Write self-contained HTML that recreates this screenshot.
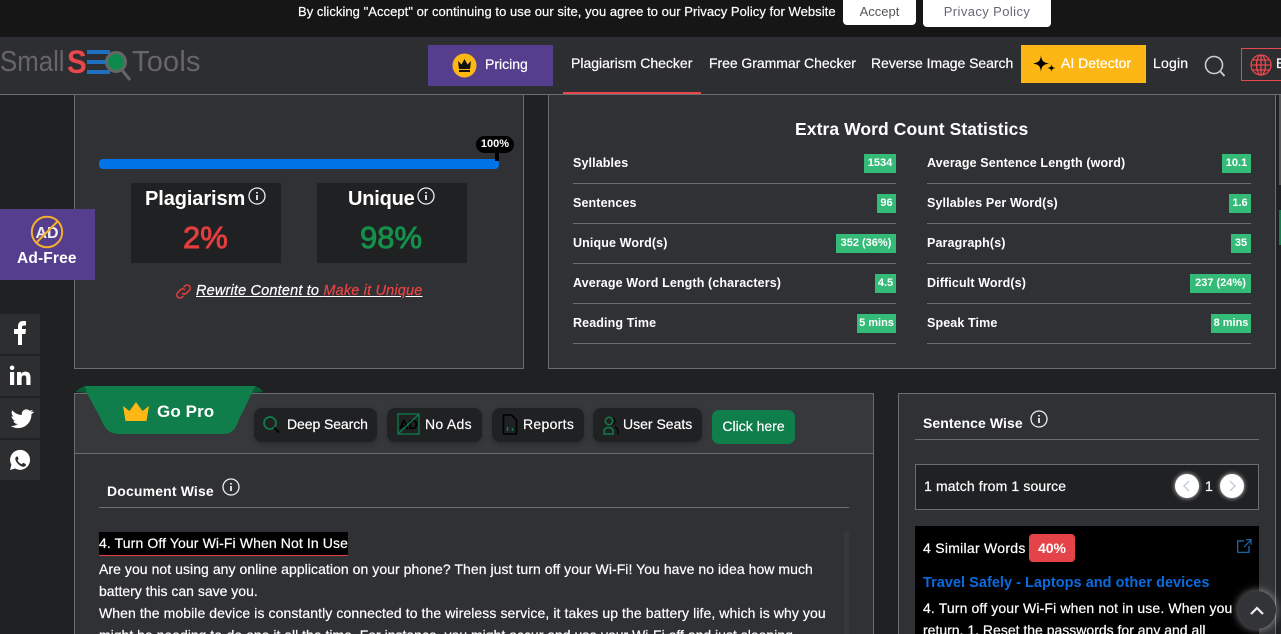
<!DOCTYPE html>
<html><head><meta charset="utf-8"><style>
html,body{margin:0;padding:0;width:1281px;height:634px;overflow:hidden;background:#202123}
body{position:relative;font-family:"Liberation Sans",sans-serif;color:#fff}
.a,.t{position:absolute}
.t{white-space:nowrap;line-height:18px;font-size:14px;-webkit-text-stroke:.2px #fff}
.b{font-weight:700;-webkit-text-stroke:0}
.lb{font-size:12.500px;letter-spacing:.12px}
.box{position:absolute;box-sizing:border-box}
.panel{position:absolute;box-sizing:border-box;background:#303134;border:1px solid #6d6d6d}
.hr{position:absolute;height:1px;background:#6d6d6d}
.bd{position:absolute;height:19px;background:#34bb78;font-size:11px;font-weight:700;line-height:19px;text-align:center;white-space:nowrap}
.soc{position:absolute;left:0;width:40px;height:40px;background:#2d2e30}
.chip{position:absolute;top:408px;height:34px;background:#202123;border-radius:8px;box-shadow:0 2px 6px rgba(0,0,0,.25)}
.logo{-webkit-text-stroke:0;color:#666;font-size:29px;line-height:34px;transform-origin:0 0}
svg{position:absolute;overflow:visible}
</style></head><body>

<div class="box" style="left:0;top:0;width:1281px;height:37px;background:#161616"></div>
<div class="t" style="left:298px;top:3px;font-size:13px;letter-spacing:.05px">By clicking "Accept" or continuing to use our site, you agree to our Privacy Policy for Website</div>
<div class="box" style="left:843px;top:0;width:73px;height:25px;background:#fff;border-radius:0 0 4px 4px;color:#555;font-size:13px;text-align:center;line-height:24px">Accept</div>
<div class="box" style="left:923px;top:0;width:128px;height:27px;background:#fff;border-radius:0 0 4px 4px;color:#667;font-size:13px;text-align:center;line-height:24px;letter-spacing:.4px">Privacy Policy</div>

<div class="box" style="left:0;top:37px;width:1281px;height:58px;background:#2d2e31;border-bottom:1px solid #6d6d6d"></div>
<div class="t logo" style="left:0;top:45px;transform:scaleX(.89)">Small</div>
<div class="t logo" style="left:67px;top:45px;font-size:32px;color:#e8474c;font-weight:700;transform:scaleX(.92)">S</div>
<svg style="left:0;top:0" width="1" height="1">
<g fill="#2070c0"><rect x="87" y="50" width="23" height="4"/><rect x="87" y="60" width="20" height="4"/><rect x="87" y="70" width="23" height="4"/></g>
<circle cx="116" cy="62" r="9.500" fill="#0f8a4f" stroke="#666" stroke-width="3"/>
<path d="M122 70l8 10" stroke="#666" stroke-width="3" fill="none"/></svg>
<div class="t logo" style="left:132px;top:45px;letter-spacing:.2px">Tools</div>

<div class="box" style="left:428px;top:45px;width:125px;height:41px;background:#553e8d"></div>
<svg style="left:452px;top:53px" width="26" height="26"><ellipse cx="12.500" cy="12.500" rx="12" ry="12" fill="#fdb714"/><path d="M6 8l3.500 3.500L12.500 6l3 5.500L19 8l-1 8H7z" fill="#111"/><rect x="7" y="17" width="11" height="2" fill="#111"/></svg>
<div class="t" style="left:485px;top:55px;font-size:14px">Pricing</div>
<div class="t" style="left:571px;top:54px;font-size:14px">Plagiarism Checker</div>
<div class="box" style="left:563px;top:92px;width:138px;height:2px;background:#e8474c"></div>
<div class="t" style="left:709px;top:54px;font-size:14px;letter-spacing:-.05px">Free Grammar Checker</div>
<div class="t" style="left:871px;top:54px;font-size:14px;letter-spacing:-.05px">Reverse Image Search</div>
<div class="box" style="left:1021px;top:45px;width:125px;height:38px;background:#fdb714"></div>
<svg style="left:1032px;top:54px" width="24" height="20"><path d="M9 1c.5 5.500 1.800 7.300 8 8.500-6.200 1.200-7.500 3-8 8.500-.5-5.500-1.800-7.300-8-8.500 6.200-1.200 7.500-3 8-8.500z" fill="#000"/><path d="M19.500 10c.2 2.600 1 3.400 4 4-3 .6-3.800 1.400-4 4-.2-2.600-1-3.400-4-4 3-.6 3.800-1.400 4-4z" fill="#000"/></svg>
<div class="t" style="left:1061px;top:54px;font-size:14px">AI Detector</div>
<div class="t" style="left:1153px;top:54px;font-size:14px;letter-spacing:.2px">Login</div>
<svg style="left:1204px;top:55px" width="24" height="24"><circle cx="10" cy="10" r="8.500" fill="none" stroke="#ccc" stroke-width="1.600"/><path d="M16 16l4.500 5" stroke="#ccc" stroke-width="1.800"/></svg>
<div class="box" style="left:1241px;top:48px;width:60px;height:33px;border:1px solid #e8474c"></div>
<svg style="left:1250px;top:54px" width="22" height="22" fill="none" stroke="#e8474c" stroke-width="1.300"><circle cx="11" cy="11" r="10"/><ellipse cx="11" cy="11" rx="4.500" ry="10"/><path d="M11 1v20M1 11h20M3 6h16M3 16h16"/></svg>
<div class="t" style="left:1276px;top:54px;font-size:14px">E</div>

<div class="panel" style="left:74px;top:94px;width:450px;height:275px"></div>
<div class="panel" style="left:548px;top:94px;width:728px;height:275px"></div>

<div class="box" style="left:99px;top:159px;width:400px;height:10px;background:#0073e6;border-radius:4px"></div>
<div class="box" style="left:476px;top:136px;width:38px;height:17px;background:#000;border-radius:9px;font-size:11px;font-weight:700;text-align:center;line-height:17px">100%</div>
<div class="box" style="left:495px;top:152px;width:4px;height:9px;background:#000"></div>

<div class="box" style="left:131px;top:183px;width:150px;height:80px;background:#202123"></div>
<div class="box" style="left:317px;top:183px;width:150px;height:80px;background:#202123"></div>
<div class="t b" style="left:145px;top:187px;font-size:20px;line-height:24px;letter-spacing:-.1px">Plagiarism</div>
<div class="t b" style="left:348px;top:187px;font-size:20px;line-height:24px;letter-spacing:-.2px">Unique</div>
<svg style="left:248px;top:187px" width="18" height="18" fill="none" stroke="#eee" stroke-width="1.300"><circle cx="9" cy="9" r="8"/><path d="M9 8v5M9 5v1.500" stroke-width="1.800"/></svg>
<svg style="left:417px;top:187px" width="18" height="18" fill="none" stroke="#eee" stroke-width="1.300"><circle cx="9" cy="9" r="8"/><path d="M9 8v5M9 5v1.500" stroke-width="1.800"/></svg>
<div class="t" style="left:183px;top:220px;font-size:31px;line-height:36px;color:#e33d3f;-webkit-text-stroke:.9px #e33d3f">2%</div>
<div class="t" style="left:360px;top:220px;font-size:31px;line-height:36px;color:#14904a;-webkit-text-stroke:.9px #14904a">98%</div>

<svg style="left:175px;top:283px" width="17" height="17" fill="none" stroke="#e33d3f" stroke-width="1.500"><path d="M7 10a3 3 0 0 0 4.500.2l3-3a3.200 3.200 0 0 0-4.500-4.500L8.500 4.200"/><path d="M10 7a3 3 0 0 0-4.500-.2l-3 3a3.200 3.200 0 0 0 4.500 4.500L8.500 12.800"/></svg>
<div class="t" style="left:196px;top:282px;font-size:14.500px;letter-spacing:.17px;font-style:italic;text-decoration:underline">Rewrite Content to <span style="color:#ea4444;-webkit-text-stroke:.2px #ea4444">Make it Unique</span></div>

<div class="t b" style="left:795px;top:119px;font-size:17.500px;line-height:20px;letter-spacing:.08px">Extra Word Count Statistics</div>

<div class="t b lb" style="left:573px;top:154px">Syllables</div>
<div class="bd" style="left:864px;top:154px;width:32px">1534</div><div class="hr" style="left:573px;top:183px;width:323px"></div>
<div class="t b lb" style="left:927px;top:154px">Average Sentence Length (word)</div>
<div class="bd" style="left:1222px;top:154px;width:29px">10.1</div><div class="hr" style="left:927px;top:183px;width:324px"></div>

<div class="t b lb" style="left:573px;top:194px">Sentences</div>
<div class="bd" style="left:877px;top:194px;width:19px">96</div><div class="hr" style="left:573px;top:223px;width:323px"></div>
<div class="t b lb" style="left:927px;top:194px">Syllables Per Word(s)</div>
<div class="bd" style="left:1229px;top:194px;width:22px">1.6</div><div class="hr" style="left:927px;top:223px;width:324px"></div>

<div class="t b lb" style="left:573px;top:234px">Unique Word(s)</div>
<div class="bd" style="left:836px;top:234px;width:60px">352 (36%)</div><div class="hr" style="left:573px;top:263px;width:323px"></div>
<div class="t b lb" style="left:927px;top:234px">Paragraph(s)</div>
<div class="bd" style="left:1231px;top:234px;width:20px">35</div><div class="hr" style="left:927px;top:263px;width:324px"></div>

<div class="t b lb" style="left:573px;top:274px">Average Word Length (characters)</div>
<div class="bd" style="left:875px;top:274px;width:21px">4.5</div><div class="hr" style="left:573px;top:303px;width:323px"></div>
<div class="t b lb" style="left:927px;top:274px">Difficult Word(s)</div>
<div class="bd" style="left:1190px;top:274px;width:61px">237 (24%)</div><div class="hr" style="left:927px;top:303px;width:324px"></div>

<div class="t b lb" style="left:573px;top:314px">Reading Time</div>
<div class="bd" style="left:857px;top:314px;width:39px">5 mins</div><div class="hr" style="left:573px;top:343px;width:323px"></div>
<div class="t b lb" style="left:927px;top:314px">Speak Time</div>
<div class="bd" style="left:1211px;top:314px;width:40px">8 mins</div><div class="hr" style="left:927px;top:343px;width:324px"></div>

<div class="box" style="left:0;top:209px;width:95px;height:71px;background:#553e8d"></div>
<svg style="left:30px;top:215px" width="34" height="34" fill="none"><circle cx="17" cy="17" r="15.200" stroke="#f3b02e" stroke-width="2"/><text x="17" y="23" text-anchor="middle" font-family="Liberation Sans" font-weight="700" font-size="16" fill="#eee" stroke="none">AD</text><path d="M6 28L28 6" stroke="#f3b02e" stroke-width="2"/></svg>
<div class="t b" style="left:17px;top:250px;font-size:15.500px;letter-spacing:.15px">Ad-Free</div>

<div class="soc" style="top:314px"></div><div class="soc" style="top:356px"></div><div class="soc" style="top:398px"></div><div class="soc" style="top:440px"></div>
<svg style="left:0;top:0" width="1" height="1" fill="#fff">
<path d="M18 345v-11h-4v-5h4v-2.500c0-4 2.200-5.500 5.300-5.500 1.200 0 2 .1 2.700.2v4.300h-2c-1.500 0-2 .7-2 2V329h4l-.6 5h-3.400v11z"/>
<path transform="translate(0,3)" d="M10 369h4.200v13H10zM12.100 362.500a2.300 2.300 0 1 1 0 4.600 2.300 2.300 0 0 1 0-4.600zM17 369h4v1.900c.7-1.200 2.200-2.300 4.300-2.300 4.400 0 5.200 2.800 5.200 6.500V382h-4.200v-6.200c0-1.600-.1-3.400-2.200-3.400-2.100 0-2.500 1.600-2.500 3.300V382H17z"/>
<path d="M33 411.500c-1 .4-1.800.6-2.400.7 1-.6 1.600-1.500 2-2.500-.9.500-1.800.9-2.800 1.100a4.700 4.700 0 0 0-8 4.300c-3.800-.2-7.200-2-9.500-4.800-1.300 2.200-.6 5 1.400 6.300-.8 0-1.500-.2-2.100-.6 0 2.300 1.600 4.200 3.800 4.700-.7.200-1.400.2-2.100.1.600 1.900 2.300 3.200 4.400 3.200-2 1.600-4.500 2.300-7 2 2.100 1.300 4.600 2.100 7.300 2.100 8.800 0 13.700-7.400 13.400-14 1-.6 1.800-1.400 2.600-2.100z"/>
<path fill-rule="evenodd" d="M10 470l1.400-5.200a10 10 0 1 1 3.700 3.700zM16 457c-1 1-1 3 .8 5.500 1.800 2.500 4 3.800 6 4.200 1.500.3 3-.6 3.200-2 .1-.5-2.500-2-3-1.800l-1.200 1.300c-2-.6-3.400-2-4.300-3.900l1-1.300c.2-.4-1-2.700-1.300-2.700z"/>
</svg>

<div class="panel" style="left:74px;top:393px;width:800px;height:260px"></div>
<div class="box" style="left:75px;top:394px;width:798px;height:60px;background:#36383b;border-bottom:1px solid #6d6d6d"></div>
<svg style="left:76px;top:386px" width="190" height="48"><path d="M0 6C3 2 7 0 12 0H176C181 0 185 2 187 6L176 7H11z" fill="#0a5c37"/><path d="M8 0H180C178 2 177 4 176 7C172 15 168 24 164 31C160 41 158 48 147 48H43C32 48 28 41 24 31C20 24 15 15 11 7C10 4 10 2 8 0z" fill="#0f7e4b"/></svg>
<svg style="left:123px;top:402px" width="26" height="19"><path d="M0 4l6.500 5L13 0l6.500 9L26 4l-2.500 15h-21z" fill="#fdb714"/></svg>
<div class="t b" style="left:157px;top:402px;font-size:17px;line-height:20px;letter-spacing:.1px">Go Pro</div>

<div class="chip" style="left:254px;width:123px"></div>
<div class="chip" style="left:387px;width:95px"></div>
<div class="chip" style="left:492px;width:92px"></div>
<div class="chip" style="left:593px;width:109px"></div>
<svg style="left:263px;top:416px" width="17" height="18" fill="none"><circle cx="7" cy="7" r="6" stroke="#0f7e4b" stroke-width="1.700"/><path d="M11 11.500l5 5" stroke="#000" stroke-width="1.700"/></svg>
<div class="t" style="left:287px;top:415px;font-size:14px;letter-spacing:-.08px">Deep Search</div>
<svg style="left:397px;top:413px" width="23" height="22" fill="none"><rect x="1" y="1" width="21" height="20" stroke="#0f7e4b" stroke-width="1.300"/><text x="11.500" y="16" text-anchor="middle" font-size="13" font-family="Liberation Sans" font-weight="700" fill="#000">AD</text><path d="M2 20L21 2" stroke="#0f7e4b" stroke-width="1.300"/></svg>
<div class="t" style="left:425px;top:415px;font-size:14px;letter-spacing:.3px">No Ads</div>
<svg style="left:502px;top:414px" width="16" height="22" fill="none"><path d="M1.500 1h8l5 5v14h-13z" stroke="#000" stroke-width="1.600"/><path d="M5.500 17v-4M10.500 17v-3" stroke="#0f7e4b" stroke-width="1.500"/></svg>
<div class="t" style="left:523px;top:415px;font-size:14px;letter-spacing:.3px">Reports</div>
<svg style="left:603px;top:416px" width="16" height="19" fill="none"><circle cx="6" cy="5" r="3.700" stroke="#0f7e4b" stroke-width="1.500"/><path d="M1 18v-3c0-2 2-3.500 4.500-3.500S10 13 10 15v3z" stroke="#0f7e4b" stroke-width="1.500"/><path d="M10 2c2.500.5 2.500 5 0 6M12 11c2 .5 3 2 3 7" stroke="#000" stroke-width="1.300"/></svg>
<div class="t" style="left:623px;top:415px;font-size:14px">User Seats</div>
<div class="box" style="left:712px;top:410px;width:83px;height:34px;background:#0f7e4b;border-radius:7px;font-size:14px;text-align:center;line-height:33px;-webkit-text-stroke:.2px #fff">Click here</div>

<div class="t b" style="left:107px;top:482px;font-size:14px;letter-spacing:.15px">Document Wise</div>
<svg style="left:222px;top:478px" width="18" height="18" fill="none" stroke="#eee" stroke-width="1.300"><circle cx="9" cy="9" r="8"/><path d="M9 8v5M9 5v1.500" stroke-width="1.800"/></svg>
<div class="hr" style="left:99px;top:507px;width:750px"></div>

<div class="box" style="left:99px;top:532px;width:249px;height:24px;background:#000;border-bottom:1px solid #e33d3f"></div>
<div class="t" style="left:99px;top:534px;font-size:14px;letter-spacing:.11px">4. Turn Off Your Wi-Fi When Not In Use</div>
<div class="t" style="left:99px;top:560px;font-size:14px;letter-spacing:.055px">Are you not using any online application on your phone? Then just turn off your Wi-Fi! You have no idea how much</div>
<div class="t" style="left:99px;top:582px;font-size:14px">battery this can save you.</div>
<div class="t" style="left:99px;top:604px;font-size:14px;letter-spacing:.085px">When the mobile device is constantly connected to the wireless service, it takes up the battery life, which is why you</div>
<div class="t" style="left:99px;top:626px;font-size:14px">might be needing to-do one it all the time. For instance, you might occur and use your Wi-Fi off and just sleeping</div>
<div class="box" style="left:844px;top:532px;width:5px;height:102px;background:#36383b"></div>

<div class="panel" style="left:898px;top:393px;width:378px;height:260px"></div>
<div class="t b" style="left:923px;top:414px;font-size:14px;letter-spacing:.08px">Sentence Wise</div>
<svg style="left:1030px;top:410px" width="18" height="18" fill="none" stroke="#eee" stroke-width="1.300"><circle cx="9" cy="9" r="8"/><path d="M9 8v5M9 5v1.500" stroke-width="1.800"/></svg>
<div class="hr" style="left:915px;top:439px;width:344px"></div>
<div class="box" style="left:915px;top:464px;width:344px;height:46px;background:#202123;border:1px solid #6d6d6d"></div>
<div class="t" style="left:924px;top:477px;font-size:14px;letter-spacing:.14px">1 match from 1 source</div>
<div class="box" style="left:1175px;top:474px;width:24px;height:24px;border-radius:50%;background:#fff;box-shadow:0 0 5px rgba(255,255,255,.8)"></div>
<svg style="left:1175px;top:474px" width="24" height="24" fill="none"><path d="M14 7l-5 5 5 5" stroke="#c5cfdc" stroke-width="1.500"/></svg>
<div class="t" style="left:1205px;top:477px;font-size:14px">1</div>
<div class="box" style="left:1220px;top:474px;width:24px;height:24px;border-radius:50%;background:#fff;box-shadow:0 0 5px rgba(255,255,255,.8)"></div>
<svg style="left:1220px;top:474px" width="24" height="24" fill="none"><path d="M10 7l5 5-5 5" stroke="#c5cfdc" stroke-width="1.500"/></svg>

<div class="box" style="left:915px;top:526px;width:344px;height:108px;background:#000"></div>
<div class="t" style="left:923px;top:539px;font-size:14px;letter-spacing:.27px">4 Similar Words</div>
<div class="box" style="left:1029px;top:534px;width:46px;height:28px;background:#e4434a;border-radius:4px;font-size:14px;font-weight:700;text-align:center;line-height:28px">40%</div>
<svg style="left:1237px;top:539px" width="15" height="14" fill="none" stroke="#1d6fb8" stroke-width="1.200"><path d="M7 2H.700v11.300H12V7M7 8l7-7M9 .700h5v5"/></svg>
<div class="t b" style="left:923px;top:574px;font-size:14.500px;letter-spacing:.03px;color:#0a6be0">Travel Safely - Laptops and other devices</div>
<div class="t" style="left:923px;top:599px;font-size:14px;letter-spacing:.13px">4. Turn off your Wi-Fi when not in use. When you</div>
<div class="t" style="left:923px;top:621px;font-size:14px">return. 1. Reset the passwords for any and all</div>

<div class="box" style="left:1238px;top:591px;width:38px;height:38px;border-radius:50%;background:#333437;box-shadow:0 0 9px rgba(255,255,255,.55)"></div>
<svg style="left:1238px;top:591px" width="38" height="38" fill="none"><path d="M13 23l6-6 6 6" stroke="#eee" stroke-width="2.200"/></svg>
<div class="box" style="left:1279px;top:95px;width:2px;height:90px;background:#555"></div>
<div class="box" style="left:1279px;top:210px;width:2px;height:35px;background:#0f7e4b"></div>
</body></html>
